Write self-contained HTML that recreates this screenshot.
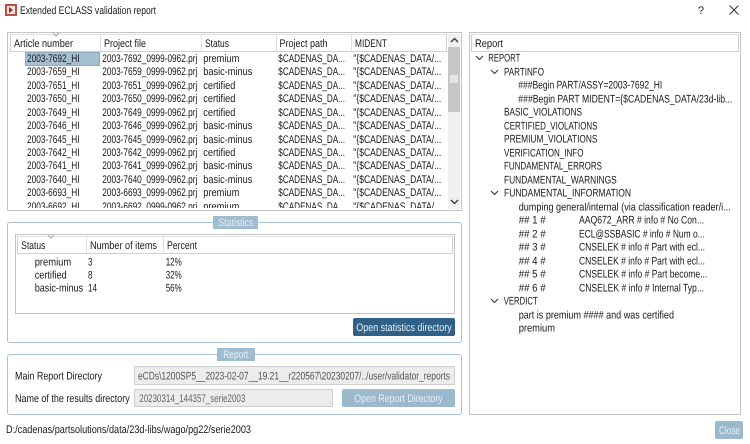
<!DOCTYPE html>
<html><head><meta charset="utf-8"><style>
html,body{margin:0;padding:0;background:#fff}
#p{position:relative;width:750px;height:444px;overflow:hidden;background:#fff;filter:blur(.2px)}
#p div{position:absolute;box-sizing:border-box}
.b{border:1px solid #c4c4c4;background:#fff}
.g{border:1px solid #a8c3d6;border-radius:3px;background:#fff}
.h{background:#fff;border:1px solid #d0d0d0;border-top-color:#e0e0e0}
.s{width:1px;background:#dedede}
svg{position:absolute;left:0;top:0}
text{font-family:"Liberation Sans",sans-serif;font-size:11px;fill:#181818;text-rendering:geometricPrecision}
.w{fill:#e6eff5}.m{fill:#555}.n{fill:#666}
</style></head><body><div id="p">

<div class="b" style="left:7px;top:32px;width:455px;height:179px"></div>
<div class="h" style="left:10px;top:34px;width:437px;height:18px"></div>
<div class="s" style="left:100px;top:35px;height:16px"></div>
<div class="s" style="left:201px;top:35px;height:16px"></div>
<div class="s" style="left:276px;top:35px;height:16px"></div>
<div class="s" style="left:351px;top:35px;height:16px"></div>
<div style="left:448px;top:34px;width:12px;height:175px;background:#f0f0f0"></div>
<div style="left:448px;top:47px;width:12px;height:65px;background:#c6c6c6"></div>
<div style="left:450px;top:75px;width:8px;height:8px;background:#e6e6e6"></div>
<div style="left:25px;top:52px;width:75px;height:14px;background:#a4c0d2;border:1px solid #8fa9bb"></div>

<div class="g" style="left:7px;top:222px;width:455px;height:121px"></div>
<div style="left:213px;top:216px;width:45px;height:13px;background:#9fbcd0"></div>
<div class="b" style="left:15px;top:234px;width:440px;height:80px"></div>
<div class="h" style="left:17px;top:236px;width:436px;height:18px"></div>
<div class="s" style="left:86px;top:237px;height:16px"></div>
<div class="s" style="left:163px;top:237px;height:16px"></div>
<div style="left:353px;top:318px;width:102px;height:18px;background:#2f6188;border-radius:2px"></div>

<div class="g" style="left:7px;top:354px;width:455px;height:61px"></div>
<div style="left:217px;top:348px;width:38px;height:13px;background:#9fbcd0"></div>
<div style="left:134px;top:366px;width:321px;height:19px;background:#ececec;border:1px solid #cdcdcd"></div>
<div style="left:134px;top:389px;width:199px;height:18px;background:#ececec;border:1px solid #cdcdcd"></div>
<div style="left:342px;top:389px;width:113px;height:18px;background:#9bb9cd;border-radius:2px"></div>

<div class="b" style="left:469px;top:32px;width:272px;height:383px"></div>
<div class="h" style="left:471px;top:34px;width:268px;height:18px"></div>
<div style="left:715px;top:421px;width:28px;height:18px;background:#9bb9cd;border-radius:2px"></div>

<svg width="750" height="444" viewBox="0 0 750 444">
<rect x="5" y="4" width="12" height="12" fill="#b8504a"/><rect x="7" y="6" width="8" height="8" fill="#f4e4e0"/><path d="M9 7l4 3-4 3z" fill="#a8201c"/>
<path d="M729.5 5.5l9 9M738.5 5.5l-9 9" stroke="#333" fill="none"/>
<path d="M53 33l3 3 3-3M48 235l3 3 3-3" stroke="#aaa" fill="none"/>
<path d="M451 42l3.5-3.5L458 42M451 200l3.5 3.5L458 200" stroke="#333" stroke-width="1.3" fill="none"/>
<path d="M476 56l3.5 3.5L483 56M491 70l3.5 3.5L498 70M491 191l3.5 3.5L498 191M491 299l3.5 3.5L498 299" stroke="#333" stroke-width="1.1" fill="none"/>

<text x="20" y="14" textLength="136" lengthAdjust="spacingAndGlyphs">Extended ECLASS validation report</text>
<text x="698" y="14" textLength="6" lengthAdjust="spacingAndGlyphs">?</text>
<text x="14" y="47" textLength="59" lengthAdjust="spacingAndGlyphs">Article number</text>
<text x="104" y="47" textLength="42" lengthAdjust="spacingAndGlyphs">Project file</text>
<text x="205" y="47" textLength="24" lengthAdjust="spacingAndGlyphs">Status</text>
<text x="279.5" y="47" textLength="48" lengthAdjust="spacingAndGlyphs">Project path</text>
<text x="355" y="47" textLength="32" lengthAdjust="spacingAndGlyphs">MIDENT</text>

<svg x="0" y="0" width="447" height="208" viewBox="0 1 447 208">
<text x="27" y="63" textLength="52.5" lengthAdjust="spacingAndGlyphs">2003-7692_HI</text><text x="102.3" y="63" textLength="95" lengthAdjust="spacingAndGlyphs">2003-7692_0999-0962.prj</text><text x="203.3" y="63" textLength="36" lengthAdjust="spacingAndGlyphs">premium</text><text x="278.3" y="63" textLength="66.7" lengthAdjust="spacingAndGlyphs">$CADENAS_DA...</text><text x="353.3" y="63" textLength="88" lengthAdjust="spacingAndGlyphs">"{$CADENAS_DATA/...</text>
<text x="27" y="76" textLength="52.5" lengthAdjust="spacingAndGlyphs">2003-7659_HI</text><text x="102.3" y="76" textLength="95" lengthAdjust="spacingAndGlyphs">2003-7659_0999-0962.prj</text><text x="203.3" y="76" textLength="49" lengthAdjust="spacingAndGlyphs">basic-minus</text><text x="278.3" y="76" textLength="66.7" lengthAdjust="spacingAndGlyphs">$CADENAS_DA...</text><text x="353.3" y="76" textLength="88" lengthAdjust="spacingAndGlyphs">"{$CADENAS_DATA/...</text>
<text x="27" y="90" textLength="52.5" lengthAdjust="spacingAndGlyphs">2003-7651_HI</text><text x="102.3" y="90" textLength="95" lengthAdjust="spacingAndGlyphs">2003-7651_0999-0962.prj</text><text x="203.3" y="90" textLength="32" lengthAdjust="spacingAndGlyphs">certified</text><text x="278.3" y="90" textLength="66.7" lengthAdjust="spacingAndGlyphs">$CADENAS_DA...</text><text x="353.3" y="90" textLength="88" lengthAdjust="spacingAndGlyphs">"{$CADENAS_DATA/...</text>
<text x="27" y="103" textLength="52.5" lengthAdjust="spacingAndGlyphs">2003-7650_HI</text><text x="102.3" y="103" textLength="95" lengthAdjust="spacingAndGlyphs">2003-7650_0999-0962.prj</text><text x="203.3" y="103" textLength="32" lengthAdjust="spacingAndGlyphs">certified</text><text x="278.3" y="103" textLength="66.7" lengthAdjust="spacingAndGlyphs">$CADENAS_DA...</text><text x="353.3" y="103" textLength="88" lengthAdjust="spacingAndGlyphs">"{$CADENAS_DATA/...</text>
<text x="27" y="117" textLength="52.5" lengthAdjust="spacingAndGlyphs">2003-7649_HI</text><text x="102.3" y="117" textLength="95" lengthAdjust="spacingAndGlyphs">2003-7649_0999-0962.prj</text><text x="203.3" y="117" textLength="32" lengthAdjust="spacingAndGlyphs">certified</text><text x="278.3" y="117" textLength="66.7" lengthAdjust="spacingAndGlyphs">$CADENAS_DA...</text><text x="353.3" y="117" textLength="88" lengthAdjust="spacingAndGlyphs">"{$CADENAS_DATA/...</text>
<text x="27" y="130" textLength="52.5" lengthAdjust="spacingAndGlyphs">2003-7646_HI</text><text x="102.3" y="130" textLength="95" lengthAdjust="spacingAndGlyphs">2003-7646_0999-0962.prj</text><text x="203.3" y="130" textLength="49" lengthAdjust="spacingAndGlyphs">basic-minus</text><text x="278.3" y="130" textLength="66.7" lengthAdjust="spacingAndGlyphs">$CADENAS_DA...</text><text x="353.3" y="130" textLength="88" lengthAdjust="spacingAndGlyphs">"{$CADENAS_DATA/...</text>
<text x="27" y="144" textLength="52.5" lengthAdjust="spacingAndGlyphs">2003-7645_HI</text><text x="102.3" y="144" textLength="95" lengthAdjust="spacingAndGlyphs">2003-7645_0999-0962.prj</text><text x="203.3" y="144" textLength="49" lengthAdjust="spacingAndGlyphs">basic-minus</text><text x="278.3" y="144" textLength="66.7" lengthAdjust="spacingAndGlyphs">$CADENAS_DA...</text><text x="353.3" y="144" textLength="88" lengthAdjust="spacingAndGlyphs">"{$CADENAS_DATA/...</text>
<text x="27" y="157" textLength="52.5" lengthAdjust="spacingAndGlyphs">2003-7642_HI</text><text x="102.3" y="157" textLength="95" lengthAdjust="spacingAndGlyphs">2003-7642_0999-0962.prj</text><text x="203.3" y="157" textLength="32" lengthAdjust="spacingAndGlyphs">certified</text><text x="278.3" y="157" textLength="66.7" lengthAdjust="spacingAndGlyphs">$CADENAS_DA...</text><text x="353.3" y="157" textLength="88" lengthAdjust="spacingAndGlyphs">"{$CADENAS_DATA/...</text>
<text x="27" y="170" textLength="52.5" lengthAdjust="spacingAndGlyphs">2003-7641_HI</text><text x="102.3" y="170" textLength="95" lengthAdjust="spacingAndGlyphs">2003-7641_0999-0962.prj</text><text x="203.3" y="170" textLength="49" lengthAdjust="spacingAndGlyphs">basic-minus</text><text x="278.3" y="170" textLength="66.7" lengthAdjust="spacingAndGlyphs">$CADENAS_DA...</text><text x="353.3" y="170" textLength="88" lengthAdjust="spacingAndGlyphs">"{$CADENAS_DATA/...</text>
<text x="27" y="184" textLength="52.5" lengthAdjust="spacingAndGlyphs">2003-7640_HI</text><text x="102.3" y="184" textLength="95" lengthAdjust="spacingAndGlyphs">2003-7640_0999-0962.prj</text><text x="203.3" y="184" textLength="49" lengthAdjust="spacingAndGlyphs">basic-minus</text><text x="278.3" y="184" textLength="66.7" lengthAdjust="spacingAndGlyphs">$CADENAS_DA...</text><text x="353.3" y="184" textLength="88" lengthAdjust="spacingAndGlyphs">"{$CADENAS_DATA/...</text>
<text x="27" y="197" textLength="52.5" lengthAdjust="spacingAndGlyphs">2003-6693_HI</text><text x="102.3" y="197" textLength="95" lengthAdjust="spacingAndGlyphs">2003-6693_0999-0962.prj</text><text x="203.3" y="197" textLength="36" lengthAdjust="spacingAndGlyphs">premium</text><text x="278.3" y="197" textLength="66.7" lengthAdjust="spacingAndGlyphs">$CADENAS_DA...</text><text x="353.3" y="197" textLength="88" lengthAdjust="spacingAndGlyphs">"{$CADENAS_DATA/...</text>
<text x="27" y="211" textLength="52.5" lengthAdjust="spacingAndGlyphs">2003-6692_HI</text><text x="102.3" y="211" textLength="95" lengthAdjust="spacingAndGlyphs">2003-6692_0999-0962.prj</text><text x="203.3" y="211" textLength="36" lengthAdjust="spacingAndGlyphs">premium</text><text x="278.3" y="211" textLength="66.7" lengthAdjust="spacingAndGlyphs">$CADENAS_DA...</text><text x="353.3" y="211" textLength="88" lengthAdjust="spacingAndGlyphs">"{$CADENAS_DATA/...</text>
</svg>

<text class="w" x="218.3" y="226" textLength="35" lengthAdjust="spacingAndGlyphs">Statistics</text>
<text x="21.3" y="249" textLength="24" lengthAdjust="spacingAndGlyphs">Status</text>
<text x="90" y="249" textLength="67" lengthAdjust="spacingAndGlyphs">Number of items</text>
<text x="167" y="249" textLength="30" lengthAdjust="spacingAndGlyphs">Percent</text>
<g transform="translate(0,-.5)">
<text x="34.7" y="266" textLength="36.5" lengthAdjust="spacingAndGlyphs">premium</text><text x="88" y="266" textLength="4.5" lengthAdjust="spacingAndGlyphs">3</text><text x="165.7" y="266" textLength="16" lengthAdjust="spacingAndGlyphs">12%</text>
<text x="34.7" y="279" textLength="32" lengthAdjust="spacingAndGlyphs">certified</text><text x="88" y="279" textLength="4.5" lengthAdjust="spacingAndGlyphs">8</text><text x="165.7" y="279" textLength="16" lengthAdjust="spacingAndGlyphs">32%</text>
<text x="34.7" y="292" textLength="48.5" lengthAdjust="spacingAndGlyphs">basic-minus</text><text x="88" y="292" textLength="9" lengthAdjust="spacingAndGlyphs">14</text><text x="165.7" y="292" textLength="16" lengthAdjust="spacingAndGlyphs">56%</text>
</g>
<text class="w" x="356.3" y="331" textLength="95.4" lengthAdjust="spacingAndGlyphs">Open statistics directory</text>

<text class="w" x="223.3" y="358" textLength="25" lengthAdjust="spacingAndGlyphs">Report</text>
<text x="15" y="379.5" textLength="87" lengthAdjust="spacingAndGlyphs">Main Report Directory</text>
<text x="15" y="402" textLength="114.7" lengthAdjust="spacingAndGlyphs">Name of the results directory</text>
<text class="m" x="138" y="379.5" textLength="312" lengthAdjust="spacingAndGlyphs">eCDs\1200SP5__2023-02-07__19.21__r220567\20230207/../user/validator_reports</text>
<text class="n" x="139.3" y="402" textLength="106" lengthAdjust="spacingAndGlyphs">20230314_144357_serie2003</text>
<text class="w" x="354.3" y="402" textLength="88.4" lengthAdjust="spacingAndGlyphs">Open Report Directory</text>
<text x="6" y="433" textLength="245" lengthAdjust="spacingAndGlyphs">D:/cadenas/partsolutions/data/23d-libs/wago/pg22/serie2003</text>

<text x="475" y="47" textLength="28" lengthAdjust="spacingAndGlyphs">Report</text>
<g transform="translate(0,-.5)">
<text x="488.3" y="62" textLength="32" lengthAdjust="spacingAndGlyphs">REPORT</text>
<text x="504" y="76" textLength="40" lengthAdjust="spacingAndGlyphs">PARTINFO</text>
<text x="518.3" y="89" textLength="144" lengthAdjust="spacingAndGlyphs">###Begin PART/ASSY=2003-7692_HI</text>
<text x="518.3" y="103" textLength="214" lengthAdjust="spacingAndGlyphs">###Begin PART MIDENT={$CADENAS_DATA/23d-lib...</text>
<text x="504" y="116" textLength="78" lengthAdjust="spacingAndGlyphs">BASIC_VIOLATIONS</text>
<text x="504" y="130" textLength="93.5" lengthAdjust="spacingAndGlyphs">CERTIFIED_VIOLATIONS</text>
<text x="504" y="143" textLength="93.5" lengthAdjust="spacingAndGlyphs">PREMIUM_VIOLATIONS</text>
<text x="504" y="157" textLength="79.5" lengthAdjust="spacingAndGlyphs">VERIFICATION_INFO</text>
<text x="504" y="170" textLength="98" lengthAdjust="spacingAndGlyphs">FUNDAMENTAL_ERRORS</text>
<text x="504" y="184" textLength="112.7" lengthAdjust="spacingAndGlyphs">FUNDAMENTAL_WARNINGS</text>
<text x="504" y="197" textLength="127" lengthAdjust="spacingAndGlyphs">FUNDAMENTAL_INFORMATION</text>
<text x="518.7" y="211" textLength="212" lengthAdjust="spacingAndGlyphs">dumping general/internal (via classification reader/i...</text>
<text x="518.7" y="224" textLength="27" lengthAdjust="spacingAndGlyphs">## 1 #</text><text x="579" y="224" textLength="125" lengthAdjust="spacingAndGlyphs">AAQ672_ARR # info # No Con...</text>
<text x="518.7" y="238" textLength="27" lengthAdjust="spacingAndGlyphs">## 2 #</text><text x="579" y="238" textLength="125.7" lengthAdjust="spacingAndGlyphs">ECL@SSBASIC # info # Num o...</text>
<text x="518.7" y="251" textLength="27" lengthAdjust="spacingAndGlyphs">## 3 #</text><text x="579" y="251" textLength="126" lengthAdjust="spacingAndGlyphs">CNSELEK # info # Part with ecl...</text>
<text x="518.7" y="265" textLength="27" lengthAdjust="spacingAndGlyphs">## 4 #</text><text x="579" y="265" textLength="126" lengthAdjust="spacingAndGlyphs">CNSELEK # info # Part with ecl...</text>
<text x="518.7" y="278" textLength="27" lengthAdjust="spacingAndGlyphs">## 5 #</text><text x="579" y="278" textLength="128.3" lengthAdjust="spacingAndGlyphs">CNSELEK # info # Part become...</text>
<text x="518.7" y="292" textLength="27" lengthAdjust="spacingAndGlyphs">## 6 #</text><text x="579" y="292" textLength="125" lengthAdjust="spacingAndGlyphs">CNSELEK # info # Internal Typ...</text>
<text x="503.7" y="305" textLength="34" lengthAdjust="spacingAndGlyphs">VERDICT</text>
<text x="518.7" y="319" textLength="155.3" lengthAdjust="spacingAndGlyphs">part is premium #### and was certified</text>
<text x="518.7" y="332" textLength="36.3" lengthAdjust="spacingAndGlyphs">premium</text>
</g>
<text class="w" x="719" y="434" textLength="21" lengthAdjust="spacingAndGlyphs">Close</text>
</svg>
</div></body></html>
